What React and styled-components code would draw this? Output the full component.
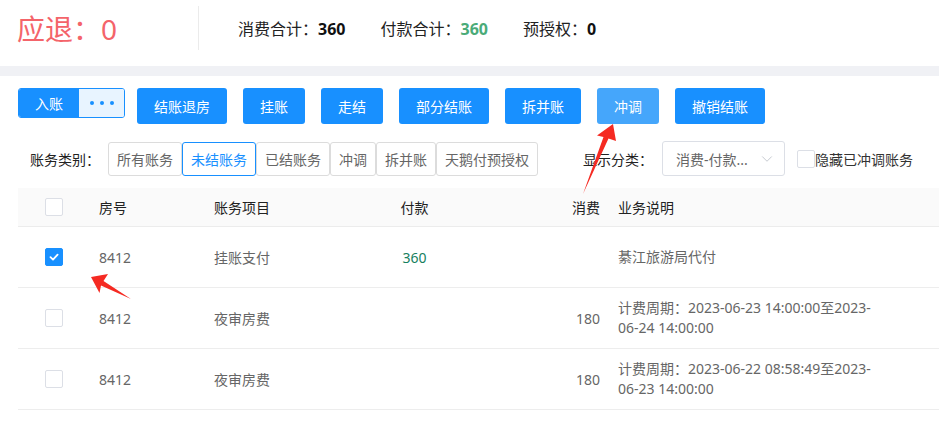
import React from 'react';
import styled, { createGlobalStyle } from 'styled-components';
import { ChevronDown } from 'lucide-react';

const Global = createGlobalStyle`
  html, body { margin: 0; padding: 0; background: #fff; }
  body {
    font-family: "Noto Sans", "Noto Sans CJK SC", sans-serif;
    color: #333;
    -webkit-font-smoothing: antialiased;
  }
  * { box-sizing: border-box; }
`;

const Page = styled.div`
  position: relative;
  width: 939px;
  height: 424px;
  overflow: hidden;
  background: #fff;
`;

const Summary = styled.header`
  display: flex;
  align-items: center;
  height: 66px;
  padding-bottom: 10px;
`;

const Refund = styled.div`
  width: 198px;
  padding-left: 17px;
  font-size: 28px;
  line-height: 1;
  color: #f4646a;
  margin-top: 2px;
`;

const Divider = styled.div`
  width: 1px;
  height: 44px;
  background: #ebebeb;
`;

const Stats = styled.div`
  display: flex;
  gap: 35px;
  margin-left: 39px;
  font-size: 16px;
  color: #222;
`;

const Stat = styled.span`
  white-space: nowrap;
`;

const StatValue = styled.b`
  font-weight: 700;
  color: ${(p) => p.$color || '#111'};
`;

const Band = styled.div`
  height: 10px;
  background: #f0f1f5;
`;

const Main = styled.main`
  padding: 12px 0 0 18px;
`;

const Toolbar = styled.div`
  display: flex;
  align-items: flex-start;
  height: 36px;
`;

const EntryGroup = styled.div`
  display: flex;
  height: 30px;
  width: 107px;
  margin-right: 12px;
  border-radius: 3px;
  overflow: hidden;
  border: 1px solid #1890ff;
`;

const EntryMain = styled.span`
  width: 60px;
  display: flex;
  align-items: center;
  justify-content: center;
  background: #1890ff;
  color: #fff;
  font-size: 14px;
`;

const EntryMore = styled.span`
  flex: 1;
  display: flex;
  align-items: center;
  justify-content: center;
  gap: 6px;
  background: #e8f4ff;
`;

const Dot = styled.i`
  width: 4px;
  height: 4px;
  border-radius: 50%;
  background: #1890ff;
`;

const ActionButton = styled.button`
  height: 36px;
  padding: 0 17px;
  margin-right: 16px;
  border: none;
  border-radius: 3px;
  background: ${(p) => (p.$light ? '#45a6fb' : '#1890ff')};
  color: #fff;
  font-family: inherit;
  font-size: 14px;
  white-space: nowrap;
`;

const FilterRow = styled.div`
  display: flex;
  align-items: center;
  height: 35px;
  margin-top: 17px;
`;

const FilterLabel = styled.span`
  font-size: 14px;
  color: #222;
  margin-left: ${(p) => p.$ml || 0}px;
  margin-right: ${(p) => p.$mr || 0}px;
  white-space: nowrap;
`;

const Tabs = styled.div`
  display: flex;
`;

const Tab = styled.span`
  height: 34px;
  padding: 0 8px;
  display: flex;
  align-items: center;
  border: 1px solid ${(p) => (p.$active ? '#1890ff' : '#dcdcdc')};
  border-radius: 3px;
  color: ${(p) => (p.$active ? '#1890ff' : '#666')};
  font-size: 14px;
  white-space: nowrap;
`;

const Select = styled.div`
  width: 123px;
  height: 35px;
  display: flex;
  align-items: center;
  justify-content: space-between;
  padding: 0 8px 0 13px;
  border: 1px solid #dcdfe6;
  border-radius: 3px;
  color: #666;
  font-size: 14px;
  margin-right: 12px;
  svg { color: #c0c4cc; }
`;

const Check = styled.span`
  width: 18px;
  height: 18px;
  flex: none;
  display: inline-flex;
  align-items: center;
  justify-content: center;
  border-radius: 2px;
  border: 1px solid ${(p) => (p.$checked ? '#1890ff' : '#dcdfe6')};
  background: ${(p) => (p.$checked ? '#1890ff' : '#fff')};
`;

const CheckLabel = styled.span`
  font-size: 14px;
  color: #333;
  white-space: nowrap;
`;

const Table = styled.div`
  margin-top: 12px;
`;

const Row = styled.div`
  display: grid;
  grid-template-columns: 63px 115px 134px 169px 111px 1fr;
  min-height: ${(p) => (p.$head ? 39 : 61)}px;
  background: ${(p) => (p.$head ? '#fafafa' : '#fff')};
  border-bottom: 1px solid ${(p) => (p.$head ? '#ececec' : '#ededed')};
  color: ${(p) => (p.$head ? '#222' : '#666')};
  font-size: 14px;
`;

const Cell = styled.div`
  display: flex;
  align-items: center;
  justify-content: ${(p) => p.$align || 'flex-start'};
  padding-left: ${(p) => p.$pl || 0}px;
  padding-right: ${(p) => p.$pr || 0}px;
  color: ${(p) => p.$color || 'inherit'};
`;

const Desc = styled.div`
  width: 257px;
  line-height: 20px;
  word-break: break-all;
`;

const Overlay = styled.svg`
  position: absolute;
  left: 0;
  top: 0;
  pointer-events: none;
`;

const tabs = ['所有账务', '未结账务', '已结账务', '冲调', '拆并账', '天鹅付预授权'];
const actions = ['结账退房', '挂账', '走结', '部分结账', '拆并账', '冲调', '撤销结账'];

const rows = [
  { checked: true, room: '8412', item: '挂账支付', pay: '360', cost: '', desc: '綦江旅游局代付' },
  { checked: false, room: '8412', item: '夜审房费', pay: '', cost: '180', desc: '计费周期：2023-06-23 14:00:00至2023-06-24 14:00:00' },
  { checked: false, room: '8412', item: '夜审房费', pay: '', cost: '180', desc: '计费周期：2023-06-22 08:58:49至2023-06-23 14:00:00' },
];

const Tick = () => (
  <svg width="12" height="12" viewBox="0 0 12 12">
    <path d="M2.5 6.2 L5 8.6 L9.6 3.6" fill="none" stroke="#fff" strokeWidth="1.8" strokeLinecap="round" strokeLinejoin="round" />
  </svg>
);

export default function App() {
  return (
    <Page>
      <Global />
      <Summary>
        <Refund>应退：0</Refund>
        <Divider />
        <Stats>
          <Stat>消费合计：<StatValue>360</StatValue></Stat>
          <Stat>付款合计：<StatValue $color="#4aab78">360</StatValue></Stat>
          <Stat>预授权：<StatValue>0</StatValue></Stat>
        </Stats>
      </Summary>
      <Band />
      <Main>
        <Toolbar>
          <EntryGroup>
            <EntryMain>入账</EntryMain>
            <EntryMore><Dot /><Dot /><Dot /></EntryMore>
          </EntryGroup>
          {actions.map((a) => (
            <ActionButton key={a} $light={a === '冲调'}>{a}</ActionButton>
          ))}
        </Toolbar>
        <FilterRow>
          <FilterLabel $ml={12} $mr={8}>账务类别：</FilterLabel>
          <Tabs>
            {tabs.map((t) => (
              <Tab key={t} $active={t === '未结账务'}>{t}</Tab>
            ))}
          </Tabs>
          <FilterLabel $ml={45} $mr={9}>显示分类：</FilterLabel>
          <Select>
            <span>消费-付款...</span>
            <ChevronDown size={18} strokeWidth={1.2} />
          </Select>
          <Check />
          <CheckLabel>隐藏已冲调账务</CheckLabel>
        </FilterRow>
        <Table>
          <Row $head>
            <Cell $pl={27}><Check /></Cell>
            <Cell $pl={18}>房号</Cell>
            <Cell $pl={18}>账务项目</Cell>
            <Cell $align="center">付款</Cell>
            <Cell $align="flex-end" $pr={10}>消费</Cell>
            <Cell $pl={8}>业务说明</Cell>
          </Row>
          {rows.map((r, i) => (
            <Row key={i}>
              <Cell $pl={27}><Check $checked={r.checked}>{r.checked && <Tick />}</Check></Cell>
              <Cell $pl={18}>{r.room}</Cell>
              <Cell $pl={18}>{r.item}</Cell>
              <Cell $align="center" $color="#16805e">{r.pay}</Cell>
              <Cell $align="flex-end" $pr={10}>{r.cost}</Cell>
              <Cell $pl={8}><Desc>{r.desc}</Desc></Cell>
            </Row>
          ))}
        </Table>
      </Main>
      <Overlay width="939" height="424" viewBox="0 0 939 424">
        <polygon points="613,124 616,141 608.5,138.5 583,194 603.5,137 597,135.5" fill="#f52a22" />
        <polygon points="91,277 108,274 103.5,281 131,299 101,285.5 99.5,293" fill="#f52a22" />
      </Overlay>
    </Page>
  );
}
